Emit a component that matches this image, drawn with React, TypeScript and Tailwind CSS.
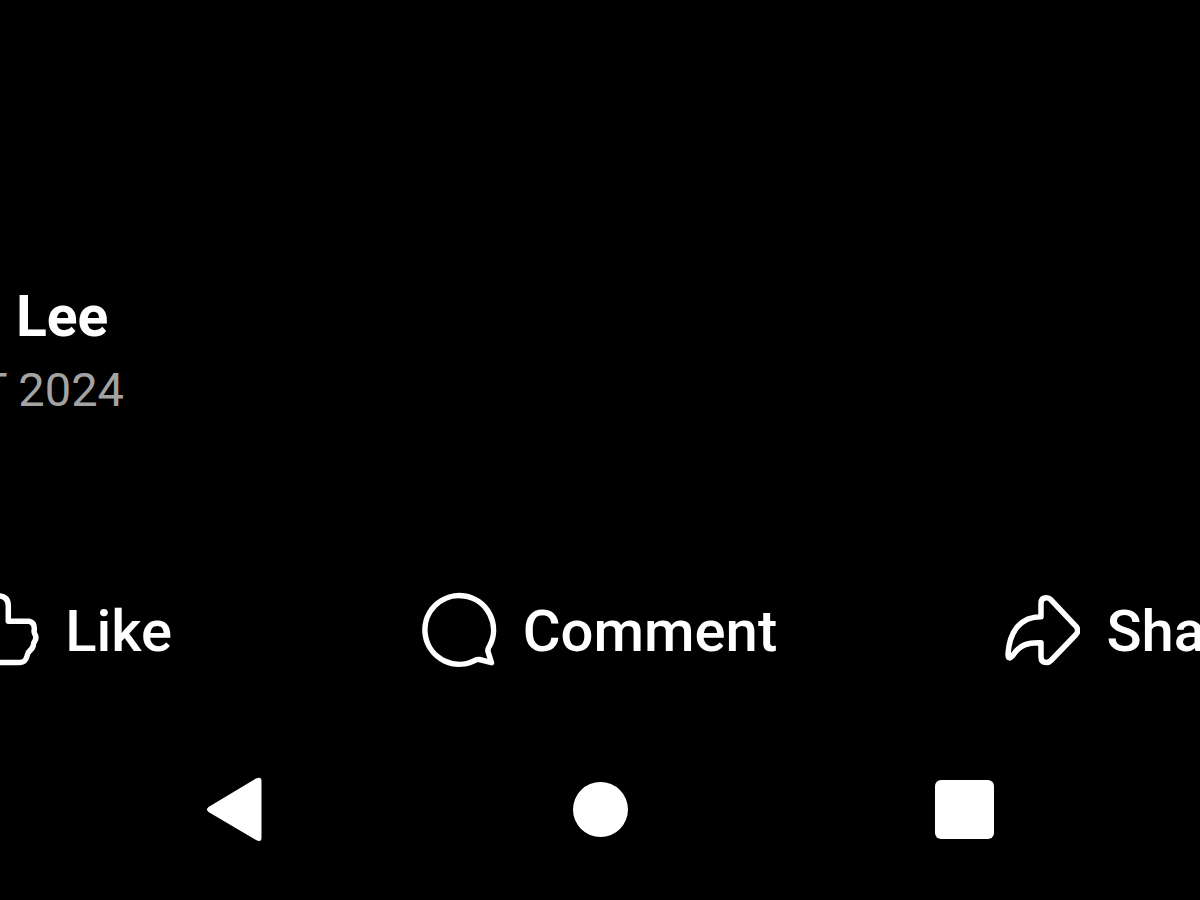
import type { ReactNode } from 'react';

const iconProps = {
  viewBox: '0 0 76 76',
  fill: 'none',
  stroke: 'currentColor',
  strokeWidth: 5.5,
  strokeLinejoin: 'round' as const,
  strokeLinecap: 'round' as const,
  className: 'w-[76px] h-[76px] shrink-0',
  'aria-hidden': true,
};

function LikeIcon() {
  return (
    <svg {...iconProps}>
      <path d="M37 4 Q45.3 5 45.3 14 V29.3 H66 Q72 30.5 71.2 38 Q70.8 40 71.8 42 Q74 45.5 71.8 49 Q70.2 51 70.2 54 Q69.5 56.5 67 58.5 Q64.5 60.5 64 64 Q62.5 70.5 57 70.5 H26 L20 65 H5 V33 H18 Q29 25 32 9 Q33 4 37 4 Z" />
    </svg>
  );
}

function CommentIcon() {
  return (
    <svg {...iconProps}>
      <path d="M55 67.8 A34.3 34.3 0 1 1 68.5 54 Q66.5 57 67 59.5 L70.5 70.7 L58.5 67.5 Q56.5 67.2 55 67.8 Z" />
    </svg>
  );
}

function ShareIcon() {
  return (
    <svg {...iconProps}>
      <path d="M37 24.7 V11.5 Q37 5.8 42.5 5.8 Q45 5.8 47 7.8 L72 34.3 Q75.4 38.5 72 42.5 L47 68.5 Q45 70.5 42.5 70.5 Q37 70.5 37 65 V50.7 C24 50.2 15.5 53 9.5 62.5 Q4 69.5 4 62 C5.5 40 16 24.7 37 24.7 Z" />
    </svg>
  );
}

interface ActionButtonProps {
  icon: ReactNode;
  label: string;
}

function ActionButton({ icon, label }: ActionButtonProps) {
  return (
    <button type="button" className="flex items-center justify-center gap-[26px]">
      {icon}
      <span className="pt-0.5 text-[58px] leading-[76px] font-medium">{label}</span>
    </button>
  );
}

export default function App() {
  return (
    <div className="min-h-screen bg-black text-white overflow-hidden font-['Roboto','Liberation_Sans',sans-serif]">
      {/* Author, runs off the left edge */}
      <header className="pt-[283px]">
        <h1 className="pl-4 text-[57px] leading-[68px] font-bold">Lee</h1>
        <div className="flex justify-end w-[124px] overflow-hidden">
          <p className="shrink-0 text-[47px] leading-[78px] text-[#a3a3a3] whitespace-nowrap">T 2024</p>
        </div>
      </header>

      {/* Post actions, wider than the window */}
      <div className="mt-[162px] flex justify-center overflow-hidden">
        <div className="grid grid-cols-3 w-[133%] shrink-0 pr-0.5">
          <ActionButton icon={<LikeIcon />} label="Like" />
          <ActionButton icon={<CommentIcon />} label="Comment" />
          <ActionButton icon={<ShareIcon />} label="Share" />
        </div>
      </div>

      {/* System navigation */}
      <nav className="mt-[104px] pb-12 px-[4.5%] grid grid-cols-3">
        <button type="button" aria-label="Back" className="flex items-center justify-center">
          <svg viewBox="0 0 64 72" className="w-16 h-[72px]" fill="currentColor" aria-hidden="true">
            <path d="M4.5 34 L52 5.5 Q57.5 3 57.5 8 V64.5 Q57.5 70 52 67 L4.5 39 Q1.5 36.5 4.5 34 Z" />
          </svg>
        </button>
        <button type="button" aria-label="Home" className="flex items-center justify-center">
          <span className="w-[55px] h-[55px] rounded-full bg-white" />
        </button>
        <button type="button" aria-label="Recent apps" className="flex items-center justify-center">
          <span className="w-[59px] h-[59px] rounded-md bg-white" />
        </button>
      </nav>
    </div>
  );
}
